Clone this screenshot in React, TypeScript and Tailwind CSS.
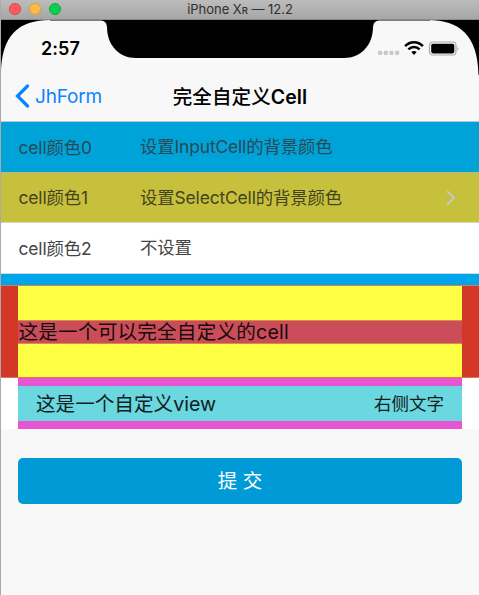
import type { ReactNode } from "react";

function TitleBar() {
  return (
    <div className="relative flex h-5 shrink-0 items-center border-b border-[#8b8b8b] bg-gradient-to-b from-[#bcbcbc] to-[#a6a6a6]">
      <div className="-mt-px flex gap-2 pl-2">
        <span className="size-3 rounded-full border border-[#e0443e] bg-[#ff5a5c]" />
        <span className="size-3 rounded-full border border-[#dea035] bg-[#ffb945]" />
        <span className="size-3 rounded-full border border-[#12ac28] bg-[#06d053]" />
      </div>
      <h1 className="absolute inset-x-0 top-0 text-center text-[13px] leading-[19px] tracking-[-0.03px] text-[#2f2f2f]">
        iPhone X<span className="text-[9.5px] font-medium">R</span> — 12.2
      </h1>
    </div>
  );
}

function Bezel() {
  return (
    <svg className="absolute inset-0 h-[102px] w-[478px]" viewBox="1 0 478 102" aria-hidden="true">
      <path d="M0 0H50C19 0 1 15 1 55H0Z" fill="#000" />
      <path d="M479 0H428C459 0 478 15 478.500 55H479Z" fill="#000" />
      <path
        d="M50 0H430V.5H379Q373.500 .5 373 7C373 25 361 38 344 38H136C119 38 107 25 107 7Q106.500 .5 101 .5H50Z"
        fill="#000"
      />
    </svg>
  );
}

function StatusBar() {
  return (
    <div className="relative h-[51px] shrink-0">
      <Bezel />
      <div className="relative flex justify-between pt-[18px] pr-[19px] pl-10">
        <time className="text-[18px] leading-[22px] font-semibold tracking-[0.05px] text-black">2:57</time>
        <div className="-mt-px flex h-[21px] items-center">
          <svg width="82" height="20" viewBox="0 0 82 20" aria-hidden="true">
            <g fill="#c9c9c9">
              <rect x="0" y="12.700" width="4.200" height="4.200" rx="1.300" />
              <rect x="5.700" y="12.700" width="4.200" height="4.200" rx="1.300" />
              <rect x="11.400" y="12.700" width="4.200" height="4.200" rx="1.300" />
              <rect x="17.100" y="12.700" width="4.200" height="4.200" rx="1.300" />
            </g>
            <g fill="none" stroke="#000" strokeWidth="2.500">
              <path d="M27.100 8.100C32 2.900 40 2.900 44.900 8.100" />
              <path d="M30.400 11.300C33.600 8.200 38.400 8.200 41.600 11.300" />
            </g>
            <path d="M33.300 14Q36 11.900 38.700 14L36 17Z" fill="#000" />
            <rect x="51.500" y="4" width="26.500" height="13" rx="3.500" fill="none" stroke="#aaa" strokeWidth="1.200" />
            <rect x="53.200" y="5.700" width="23.100" height="9.700" rx="1.800" fill="#000" />
            <path d="M79.500 8.500Q81.300 10.500 79.500 12.500Z" fill="#999" />
          </svg>
        </div>
      </div>
    </div>
  );
}

function NavBar() {
  return (
    <nav className="relative grid h-[51px] shrink-0 grid-cols-[140px_1fr_140px] items-center border-b border-[#bdc8cc]">
      <button className="flex items-center gap-[5px] pl-3.5 text-[19px] tracking-[-0.2px] text-[#0a84ff]">
        <svg width="15" height="24" viewBox="0 0 15 24" fill="none" stroke="currentColor" strokeWidth="3.200" strokeLinecap="round" aria-hidden="true">
          <path d="M12.500 2L2.500 12L12.500 22" />
        </svg>
        <span className="pt-0.5">JhForm</span>
      </button>
      <h2 className="pt-[3px] text-center text-[19.5px] font-medium tracking-[0.1px] whitespace-nowrap text-black">
        完全自定义<span className="font-semibold">Cell</span>
      </h2>
    </nav>
  );
}

function FormCell({ label, value, className, children }: { label: string; value: string; className: string; children?: ReactNode }) {
  return (
    <div className={`flex shrink-0 items-center border-b pl-[17.5px] text-[17.4px] tracking-[-0.13px] ${className}`}>
      <span className="w-[121.500px] pt-0.5">{label}</span>
      <span className="flex-1 pt-px whitespace-nowrap">{value}</span>
      {children}
    </div>
  );
}

export default function App() {
  return (
    <div className="flex h-[595px] w-[479px] flex-col overflow-hidden border-l border-[#aaa] bg-[#f8f8f8] font-['Inter','Noto_Sans_CJK_SC',sans-serif]">
      <TitleBar />
      <StatusBar />
      <NavBar />
      <main className="flex flex-1 flex-col">
        <FormCell label="cell颜色0" value="设置InputCell的背景颜色" className="h-[51px] border-[#aebd97] bg-[#00a3d8] text-[#294954]" />
        <FormCell label="cell颜色1" value="设置SelectCell的背景颜色" className="h-[50px] border-[#dadab9] bg-[#c6c03c] text-[#45431f]">
          <svg className="mr-[22px]" width="12" height="18" viewBox="0 0 12 18" fill="none" stroke="#c7c7c7" strokeWidth="2" aria-hidden="true">
            <path d="M2 2L9 9L2 16" />
          </svg>
        </FormCell>
        <FormCell label="cell颜色2" value="不设置" className="h-[51px] border-[#cbdce3] bg-white text-[#444]" />
        <div className="h-[11px] shrink-0 bg-[#00a5eb]" />
        <section className="flex h-[93px] shrink-0 border-y border-[#d77b50] bg-[#d33727] px-[17px]">
          <div className="flex flex-1 items-center bg-[#ffff43]">
            <p className="h-6 flex-1 border-y border-[#df8849] bg-[#cb4d5a] pl-[0.5px] text-[19.6px] leading-[23px] tracking-[0.2px] whitespace-nowrap text-[#180b0d]">
              这是一个可以完全自定义的cell
            </p>
          </div>
        </section>
        <section className="flex h-[51px] shrink-0 bg-white px-[17px]">
          <div className="flex flex-1 items-center justify-between border-y-8 border-[#e855d3] bg-[#6bd7df] px-[18px] text-[#102022]">
            <span className="pt-0.5 text-[19.6px]">这是一个自定义view</span>
            <span className="pt-0.5 text-[17.5px]">右侧文字</span>
          </div>
        </section>
        <button className="mx-[17px] mt-[29px] h-[46px] shrink-0 rounded-[5px] bg-[#009ad6] pt-0.5 text-[19.5px] text-white">提 交</button>
      </main>
    </div>
  );
}
